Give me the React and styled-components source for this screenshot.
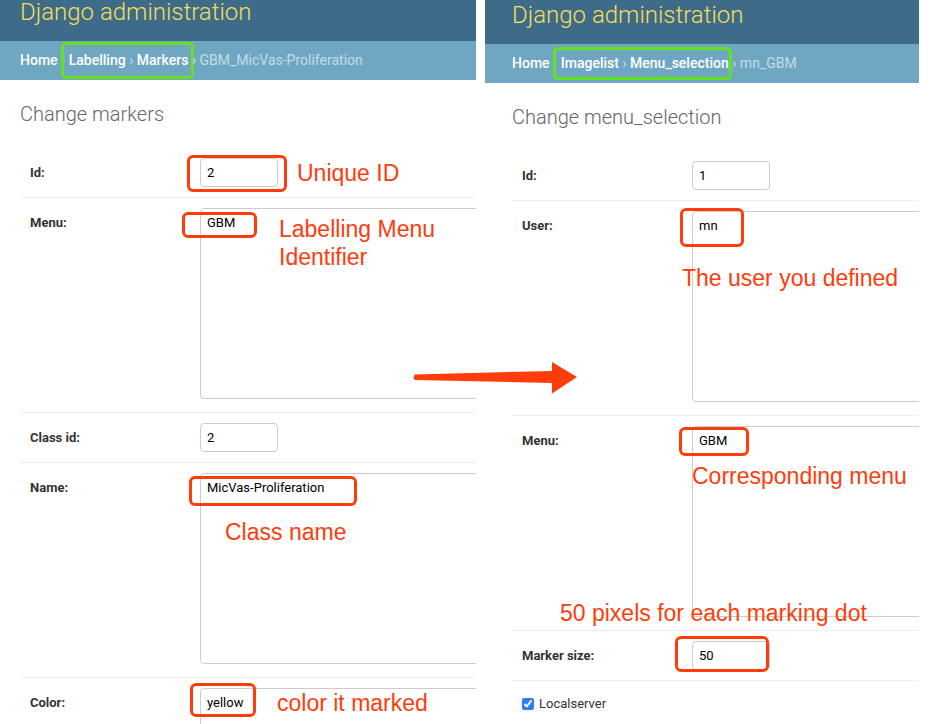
import styled, { createGlobalStyle } from "styled-components";

const RED = "#fd3d0b";
const GREEN = "#63e21d";

const GlobalStyle = createGlobalStyle`
  html, body {
    margin: 0;
    padding: 0;
    background: #fff;
  }
  body {
    font-family: Roboto, "Liberation Sans", Arial, sans-serif;
    overflow: hidden;
  }
`;

const Page = styled.div`
  position: relative;
  display: flex;
  align-items: flex-start;
  gap: 9px;
  width: 931px;
  height: 724px;
  overflow: hidden;
  background: #fff;
`;

const Panel = styled.section`
  flex: 0 0 ${(p) => p.$width}px;
  height: 724px;
  overflow: hidden;
  background: #fff;
`;

const Header = styled.header`
  height: ${(p) => p.$height}px;
  box-sizing: border-box;
  padding: ${(p) => p.$top}px ${(p) => p.$inset}px 0;
  background: #3d6b88;
`;

const Branding = styled.h1`
  margin: 0;
  font-size: 24px;
  line-height: 24px;
  font-weight: 300;
  color: #f5dd5d;
  white-space: nowrap;
`;

const Crumbs = styled.nav`
  height: 39px;
  padding: 0 ${(p) => p.$inset}px;
  background: #6fa7c3;
  color: #c4dce8;
  font-size: 14px;
  line-height: 39px;
  white-space: nowrap;
`;

const CrumbLink = styled.a`
  color: #fff;
  font-weight: 500;
  text-decoration: none;
`;

// green box drawn round part of the trail, without moving the text
const Highlight = styled.span`
  display: inline-block;
  line-height: 17px;
  border: 3px solid ${GREEN};
  border-radius: 5px;
  padding: ${(p) => p.$py}px ${(p) => p.$pr}px ${(p) => p.$py}px ${(p) => p.$pl}px;
  margin: ${(p) => -(p.$py + 3)}px ${(p) => -(p.$pr + 3)}px
    ${(p) => -(p.$py + 3)}px ${(p) => -(p.$pl + 3)}px;
`;

const Content = styled.div`
  padding: 22px 0 0 ${(p) => p.$inset}px;
`;

const Title = styled.h1`
  margin: 0 0 22px;
  font-size: 20px;
  line-height: 24px;
  font-weight: 300;
  color: #666;
  white-space: nowrap;
`;

const Row = styled.div`
  display: flex;
  align-items: flex-start;
  padding: 10px 10px 10px;
  border-bottom: 1px solid #eee;
`;

const Label = styled.label`
  flex: 0 0 170px;
  font-size: 13px;
  line-height: 29px;
  font-weight: 700;
  color: #333;
`;

const Field = styled.div`
  position: relative;
  flex: none;
`;

const Input = styled.input`
  display: block;
  box-sizing: border-box;
  width: 78px;
  height: 29px;
  margin: 0;
  padding: 0 6px;
  border: 1px solid #ccc;
  border-radius: 4px;
  background: #fff;
  font-family: Roboto, "Liberation Sans", sans-serif;
  font-size: 13px;
  color: #000;
  outline: none;
`;

const TextArea = styled.textarea`
  display: block;
  box-sizing: border-box;
  width: 610px;
  height: 191px;
  margin: 0 0 3px;
  padding: 6px;
  border: 1px solid #ccc;
  border-radius: 4px;
  background: #fff;
  font-family: Roboto, "Liberation Sans", sans-serif;
  font-size: 13px;
  line-height: 16px;
  color: #000;
  resize: none;
  outline: none;
`;

const CheckRow = styled.label`
  display: flex;
  align-items: center;
  gap: 5px;
  padding: 16px 10px;
  font-size: 13px;
  line-height: 13px;
  color: #333;
`;

const Check = styled.input`
  width: 12px;
  height: 12px;
  margin: 0;
  accent-color: #2d7ef7;
`;

// annotations laid over the form
const Mark = styled.span`
  position: absolute;
  left: ${(p) => p.$x}px;
  top: ${(p) => p.$y}px;
  width: ${(p) => p.$w}px;
  height: ${(p) => p.$h}px;
  box-sizing: border-box;
  border: 3px solid ${RED};
  border-radius: 6px;
  pointer-events: none;
`;

const Note = styled.span`
  position: absolute;
  left: ${(p) => p.$x}px;
  top: ${(p) => p.$y}px;
  font-family: "Liberation Sans", Arial, sans-serif;
  font-size: 23px;
  line-height: ${(p) => p.$lh || 23}px;
  color: ${RED};
  white-space: nowrap;
  pointer-events: none;
`;

const Arrow = styled.svg`
  position: absolute;
  left: 410px;
  top: 358px;
  width: 172px;
  height: 40px;
  overflow: visible;
`;

function AdminTop({ inset, headerHeight, headerTop, children }) {
  return (
    <>
      <Header $height={headerHeight} $top={headerTop} $inset={inset}>
        <Branding>Django administration</Branding>
      </Header>
      <Crumbs $inset={inset}>{children}</Crumbs>
    </>
  );
}

function MarkersForm() {
  return (
    <Panel $width={476}>
      <AdminTop inset={20} headerHeight={41} headerTop={0}>
        <CrumbLink>Home</CrumbLink> ›{" "}
        <Highlight $py={7} $pl={5} $pr={3}>
          <CrumbLink>Labelling</CrumbLink> › <CrumbLink>Markers</CrumbLink>
        </Highlight>{" "}
        › GBM_MicVas-Proliferation
      </AdminTop>
      <Content $inset={20}>
        <Title>Change markers</Title>
        <Row>
          <Label>Id:</Label>
          <Field>
            <Input readOnly defaultValue="2" />
            <Mark $x={-13} $y={-3} $w={100} $h={37} />
            <Note $x={97} $y={4}>Unique ID</Note>
          </Field>
        </Row>
        <Row>
          <Label>Menu:</Label>
          <Field>
            <TextArea readOnly defaultValue="GBM" />
            <Mark $x={-18} $y={4} $w={75} $h={26} />
            <Note $x={79} $y={7} $lh={28}>
              Labelling Menu
              <br />
              Identifier
            </Note>
          </Field>
        </Row>
        <Row>
          <Label>Class id:</Label>
          <Field>
            <Input readOnly defaultValue="2" />
          </Field>
        </Row>
        <Row>
          <Label>Name:</Label>
          <Field>
            <TextArea readOnly defaultValue="MicVas-Proliferation" />
            <Mark $x={-11} $y={3} $w={168} $h={30} />
            <Note $x={25} $y={48}>Class name</Note>
          </Field>
        </Row>
        <Row>
          <Label>Color:</Label>
          <Field>
            <TextArea readOnly defaultValue="yellow" />
            <Mark $x={-10} $y={-5} $w={66} $h={34} />
            <Note $x={77} $y={4}>color it marked</Note>
          </Field>
        </Row>
      </Content>
    </Panel>
  );
}

function MenuSelectionForm() {
  return (
    <Panel $width={434}>
      <AdminTop inset={27} headerHeight={44} headerTop={3}>
        <CrumbLink>Home</CrumbLink> ›{" "}
        <Highlight $py={5} $pl={5} $pr={0}>
          <CrumbLink>Imagelist</CrumbLink> › <CrumbLink>Menu_selection</CrumbLink>
        </Highlight>{" "}
        › mn_GBM
      </AdminTop>
      <Content $inset={27}>
        <Title>Change menu_selection</Title>
        <Row>
          <Label>Id:</Label>
          <Field>
            <Input readOnly defaultValue="1" />
          </Field>
        </Row>
        <Row>
          <Label>User:</Label>
          <Field>
            <TextArea readOnly defaultValue="mn" />
            <Mark $x={-12} $y={-3} $w={64} $h={39} />
            <Note $x={-10} $y={56}>The user you defined</Note>
          </Field>
        </Row>
        <Row>
          <Label>Menu:</Label>
          <Field>
            <TextArea readOnly defaultValue="GBM" />
            <Mark $x={-13} $y={1} $w={70} $h={29} />
            <Note $x={0} $y={39}>Corresponding menu</Note>
            <Note $x={-132} $y={176}>50 pixels for each marking dot</Note>
          </Field>
        </Row>
        <Row>
          <Label>Marker size:</Label>
          <Field>
            <Input readOnly defaultValue="50" />
            <Mark $x={-17} $y={-5} $w={94} $h={36} />
          </Field>
        </Row>
        <CheckRow>
          <Check type="checkbox" defaultChecked />
          Localserver
        </CheckRow>
      </Content>
    </Panel>
  );
}

export default function App() {
  return (
    <Page>
      <GlobalStyle />
      <MarkersForm />
      <MenuSelectionForm />
      <Arrow viewBox="0 0 172 40">
        <path
          d="M5 16.5 L142 13 L142 4 L167 19 L142 35.5 L142 25 L5 22 Q2 19.25 5 16.5 Z"
          fill={RED}
        />
      </Arrow>
    </Page>
  );
}
